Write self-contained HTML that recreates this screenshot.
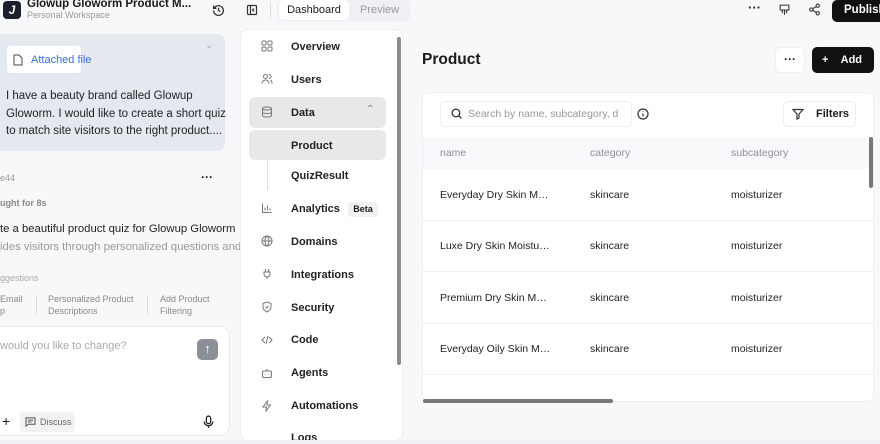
<!DOCTYPE html><html><head><style>
*{box-sizing:border-box;margin:0;padding:0}
body{width:880px;height:444px;overflow:hidden;background:#f7f8fa;font-family:"Liberation Sans",sans-serif;position:relative;color:#1a1a1a}
.a{position:absolute;white-space:nowrap}
.nav{position:absolute;left:291px;font-size:11px;font-weight:bold;color:#222}
.cell{position:absolute;font-size:10.5px;color:#222}
</style></head><body>
<div class="a" style="left:3px;top:1px;width:18px;height:18px;background:#1b1f2e;border-radius:4px;color:#fff;font-weight:bold;font-size:12px;text-align:center;line-height:18px;font-style:italic">J</div>
<div class="a" style="left:27px;top:-2px;font-size:11.5px;font-weight:bold">Glowup Gloworm Product M...</div>
<div class="a" style="left:27px;top:10px;font-size:9px;color:#999">Personal Workspace</div>
<svg class="a" style="left:212px;top:4px" width="13" height="13" viewBox="0 0 24 24" fill="none" stroke="#333" stroke-width="2.4"><path d="M3 12a9 9 0 1 0 3-6.7L3 8M3 3v5h5M12 7v5l3 2"/></svg>
<svg class="a" style="left:246px;top:4px" width="12" height="12" viewBox="0 0 24 24" fill="none" stroke="#333" stroke-width="2.4"><rect x="3" y="3" width="18" height="18" rx="2"/><path d="M9 3v18M16 9l-3 3 3 3"/></svg>
<div class="a" style="left:270px;top:2px;width:1px;height:16px;background:#ddd"></div>
<div class="a" style="left:277px;top:0;width:133px;height:21px;background:#eef0f3;border-radius:5px"></div>
<div class="a" style="left:279px;top:0;width:70px;height:20px;background:#fff;border-radius:5px;font-size:11px;text-align:center;line-height:20px">Dashboard</div>
<div class="a" style="left:360px;top:4px;font-size:11px;color:#999">Preview</div>
<div class="a" style="left:748px;top:0;font-size:13px;font-weight:bold">···</div>
<svg class="a" style="left:778px;top:3px" width="13" height="14" viewBox="0 0 24 24" fill="none" stroke="#333" stroke-width="2"><path d="M4 3h16v9H4zM8 12v6M12 12v9M16 12v6"/></svg>
<svg class="a" style="left:808px;top:3px" width="13" height="13" viewBox="0 0 24 24" fill="none" stroke="#333" stroke-width="2"><circle cx="18" cy="5" r="3"/><circle cx="6" cy="12" r="3"/><circle cx="18" cy="19" r="3"/><path d="M8.6 13.5l6.8 4M15.4 6.5l-6.8 4"/></svg>
<div class="a" style="left:832px;top:0;width:60px;height:22px;background:#111;border-radius:5px;color:#fff;font-size:11.5px;font-weight:bold;line-height:21px;padding-left:12px">Publish</div>
<div class="a" style="left:0;top:34px;width:225px;height:117px;background:#e4e8ef;border-radius:0 8px 8px 0"></div>
<div class="a" style="left:205px;top:40px;font-size:10px;color:#aaa">⌄</div>
<div class="a" style="left:7px;top:46px;width:74px;height:27px;background:#fff;border-radius:4px"></div>
<svg class="a" style="left:13px;top:54px" width="10" height="12" viewBox="0 0 20 24" fill="none" stroke="#444" stroke-width="2"><path d="M2 2h10l6 6v14H2z"/></svg>
<div class="a" style="left:31px;top:54px;font-size:11px;color:#3b6fd6">Attached file</div>
<div class="a" style="left:6px;top:88px;font-size:11.5px;line-height:17.6px;color:#222;white-space:normal;width:222px">I have a beauty brand called Glowup Gloworm. I would like to create a short quiz to match site visitors to the right product....</div>
<div class="a" style="left:0;top:173px;font-size:9px;color:#999">e44</div>
<div class="a" style="left:201px;top:170px;font-size:12px;font-weight:bold">···</div>
<div class="a" style="left:0;top:198px;font-size:9px;color:#888;font-weight:bold">ught for 8s</div>
<div class="a" style="left:0;top:223px;font-size:11.3px;color:#222">te a beautiful product quiz for Glowup Gloworm</div>
<div class="a" style="left:0;top:241px;font-size:11.3px;color:#999">ides visitors through personalized questions and</div>
<div class="a" style="left:0;top:273px;font-size:9px;color:#aaa">ggestions</div>
<div class="a" style="left:0;top:293px;font-size:9px;color:#888;line-height:12px">Email<br>p</div>
<div class="a" style="left:36px;top:295px;width:1px;height:20px;background:#ddd"></div>
<div class="a" style="left:48px;top:293px;font-size:9px;color:#888;line-height:12px">Personalized Product<br>Descriptions</div>
<div class="a" style="left:147px;top:295px;width:1px;height:20px;background:#ddd"></div>
<div class="a" style="left:160px;top:293px;font-size:9px;color:#888;line-height:12px">Add Product<br>Filtering</div>
<div class="a" style="left:-10px;top:326px;width:240px;height:110px;background:#fff;border:1px solid #e6e8ec;border-radius:10px"></div>
<div class="a" style="left:0;top:340px;font-size:11px;color:#aaa">would you like to change?</div>
<div class="a" style="left:197px;top:339px;width:21px;height:21px;background:#8a8f98;border-radius:5px;color:#fff;font-size:13px;text-align:center;line-height:20px">↑</div>
<div class="a" style="left:2px;top:413px;font-size:14px">+</div>
<div class="a" style="left:20px;top:412px;width:55px;height:20px;background:#f1f2f4;border-radius:4px;font-size:9px;color:#666;line-height:20px;padding-left:20px">Discuss</div>
<svg class="a" style="left:25px;top:417px" width="11" height="10" viewBox="0 0 24 22" fill="none" stroke="#555" stroke-width="2.2"><path d="M2 2h20v14H7l-5 4zM6 7h12M6 11h8"/></svg>
<svg class="a" style="left:203px;top:415px" width="11" height="14" viewBox="0 0 20 26" fill="none" stroke="#222" stroke-width="2.4"><rect x="6" y="2" width="8" height="14" rx="4"/><path d="M2 12a8 8 0 0 0 16 0M10 20v4"/></svg>
<div class="a" style="left:240px;top:29px;width:163px;height:412px;background:#fff;border:1px solid #eceef1;border-radius:8px"></div>
<div class="a" style="left:249px;top:97px;width:137px;height:31px;background:#e8e8e9;border-radius:6px"></div>
<div class="a" style="left:249px;top:130px;width:137px;height:30px;background:#e8e8e9;border-radius:6px"></div>
<div class="a" style="left:267px;top:160px;width:1px;height:30px;background:#ddd"></div>
<div class="a" style="left:397px;top:37px;width:4px;height:328px;background:#8c8c8c;border-radius:2px"></div>
<svg class="a" style="left:261px;top:40px" width="12" height="12" viewBox="0 0 24 24" fill="none" stroke="#777" stroke-width="2"><rect x="2" y="2" width="8" height="8" rx="2"/><rect x="14" y="2" width="8" height="8" rx="2"/><rect x="2" y="14" width="8" height="8" rx="2"/><rect x="14" y="14" width="8" height="8" rx="2"/></svg>
<div class="nav" style="top:41px">Overview</div>
<svg class="a" style="left:261px;top:73px" width="12" height="12" viewBox="0 0 24 24" fill="none" stroke="#777" stroke-width="2"><circle cx="9" cy="7" r="4"/><path d="M2 21c0-4 3-7 7-7s7 3 7 7M16 3a4 4 0 0 1 0 8M19 14c2 1 3 4 3 7"/></svg>
<div class="nav" style="top:74px">Users</div>
<svg class="a" style="left:261px;top:106px" width="12" height="12" viewBox="0 0 24 24" fill="none" stroke="#777" stroke-width="2"><ellipse cx="12" cy="5" rx="9" ry="3"/><path d="M3 5v14c0 2 4 3 9 3s9-1 9-3V5M3 12c0 2 4 3 9 3s9-1 9-3"/></svg>
<div class="nav" style="top:107px">Data</div>
<div class="a" style="left:366px;top:104px;font-size:10px;color:#888">⌃</div>
<div class="nav" style="top:140px">Product</div>
<div class="nav" style="top:170px">QuizResult</div>
<svg class="a" style="left:261px;top:202px" width="12" height="12" viewBox="0 0 24 24" fill="none" stroke="#777" stroke-width="2"><path d="M3 3v18h18M8 17v-6M13 17V7M18 17v-4"/></svg>
<div class="nav" style="top:203px">Analytics</div>
<div class="a" style="left:348px;top:202px;width:30px;height:15px;background:#f1f1f2;border-radius:4px;font-size:9px;font-weight:bold;text-align:center;line-height:15px">Beta</div>
<svg class="a" style="left:261px;top:235px" width="12" height="12" viewBox="0 0 24 24" fill="none" stroke="#777" stroke-width="2"><circle cx="12" cy="12" r="10"/><path d="M2 12h20M12 2c3 3 4 6 4 10s-1 7-4 10c-3-3-4-6-4-10s1-7 4-10"/></svg>
<div class="nav" style="top:236px">Domains</div>
<svg class="a" style="left:261px;top:268px" width="12" height="12" viewBox="0 0 24 24" fill="none" stroke="#777" stroke-width="2"><path d="M9 2v6M15 2v6M6 8h12v4a6 6 0 0 1-12 0zM12 18v4"/></svg>
<div class="nav" style="top:269px">Integrations</div>
<svg class="a" style="left:261px;top:301px" width="12" height="12" viewBox="0 0 24 24" fill="none" stroke="#777" stroke-width="2"><path d="M12 2l8 3v7c0 5-4 8-8 10-4-2-8-5-8-10V5zM9 12l2 2 4-4"/></svg>
<div class="nav" style="top:302px">Security</div>
<svg class="a" style="left:261px;top:334px" width="12" height="12" viewBox="0 0 24 24" fill="none" stroke="#777" stroke-width="2"><path d="M8 6l-6 6 6 6M16 6l6 6-6 6M14 4l-4 16"/></svg>
<div class="nav" style="top:334px">Code</div>
<svg class="a" style="left:261px;top:367px" width="12" height="12" viewBox="0 0 24 24" fill="none" stroke="#777" stroke-width="2"><rect x="3" y="8" width="18" height="13" rx="3"/><path d="M12 8V4M9 14v1M15 14v1"/></svg>
<div class="nav" style="top:367px">Agents</div>
<svg class="a" style="left:261px;top:400px" width="12" height="12" viewBox="0 0 24 24" fill="none" stroke="#777" stroke-width="2"><path d="M13 2L4 14h7l-1 8 9-12h-7z"/></svg>
<div class="nav" style="top:400px">Automations</div>
<div class="nav" style="top:432px">Logs</div>
<div class="a" style="left:422px;top:51px;font-size:15.5px;font-weight:bold">Product</div>
<div class="a" style="left:775px;top:47px;width:30px;height:26px;background:#fff;border:1px solid #eee;border-radius:5px;text-align:center;font-size:12px;font-weight:bold;line-height:22px">···</div>
<div class="a" style="left:812px;top:47px;width:62px;height:26px;background:#111;border-radius:5px;color:#fff;font-size:11px;font-weight:bold;line-height:26px;padding-left:10px">+&nbsp;&nbsp;&nbsp;&nbsp;Add</div>
<div class="a" style="left:422px;top:92px;width:452px;height:310px;background:#fff;border:1px solid #eceef1;border-radius:6px;overflow:hidden">
<div class="a" style="left:0;top:44px;width:452px;height:32px;background:#f8f9fa"></div>
<div class="a" style="left:0;top:127px;width:452px;height:1px;background:#f0f0f0"></div>
<div class="a" style="left:0;top:178px;width:452px;height:1px;background:#f0f0f0"></div>
<div class="a" style="left:0;top:230px;width:452px;height:1px;background:#f0f0f0"></div>
<div class="a" style="left:0;top:281px;width:452px;height:1px;background:#f0f0f0"></div>
</div>
<div class="a" style="left:440px;top:101px;width:192px;height:26px;background:#fff;border:1px solid #eceef1;border-radius:5px"></div>
<svg class="a" style="left:450px;top:107px" width="13" height="13" viewBox="0 0 24 24" fill="none" stroke="#333" stroke-width="2.4"><circle cx="11" cy="11" r="7"/><path d="M16 16l5 5"/></svg>
<div class="a" style="left:468px;top:108px;font-size:10.5px;color:#999">Search by name, subcategory, d</div>
<svg class="a" style="left:637px;top:108px" width="12" height="12" viewBox="0 0 24 24" fill="none" stroke="#333" stroke-width="2.4"><circle cx="12" cy="12" r="10"/><path d="M12 11v6M12 7v1"/></svg>
<div class="a" style="left:783px;top:101px;width:73px;height:26px;background:#fff;border:1px solid #eceef1;border-radius:5px;font-size:11px;font-weight:bold;line-height:24px;padding-left:32px">Filters</div>
<svg class="a" style="left:792px;top:108px" width="12" height="12" viewBox="0 0 24 24" fill="none" stroke="#333" stroke-width="2.4"><path d="M2 3h20l-8 9v8l-4 2V12z"/></svg>
<div class="cell" style="left:440px;top:147px;color:#8a8f98">name</div>
<div class="cell" style="left:590px;top:147px;color:#8a8f98">category</div>
<div class="cell" style="left:731px;top:147px;color:#8a8f98">subcategory</div>
<div class="cell" style="left:440px;top:189px">Everyday Dry Skin M…</div><div class="cell" style="left:590px;top:189px">skincare</div><div class="cell" style="left:731px;top:189px">moisturizer</div>
<div class="cell" style="left:440px;top:240px">Luxe Dry Skin Moistu…</div><div class="cell" style="left:590px;top:240px">skincare</div><div class="cell" style="left:731px;top:240px">moisturizer</div>
<div class="cell" style="left:440px;top:292px">Premium Dry Skin M…</div><div class="cell" style="left:590px;top:292px">skincare</div><div class="cell" style="left:731px;top:292px">moisturizer</div>
<div class="cell" style="left:440px;top:343px">Everyday Oily Skin M…</div><div class="cell" style="left:590px;top:343px">skincare</div><div class="cell" style="left:731px;top:343px">moisturizer</div>
<div class="a" style="left:869px;top:137px;width:4px;height:51px;background:#777;border-radius:2px"></div>
<div class="a" style="left:423px;top:399px;width:190px;height:4px;background:#777;border-radius:2px"></div>
<div class="a" style="left:0;top:440px;width:880px;height:4px;background:#eef0f3"></div>
</body></html>
